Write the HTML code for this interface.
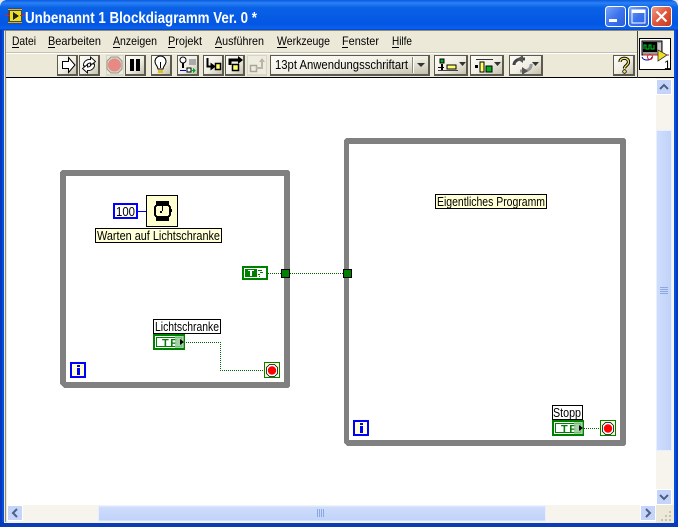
<!DOCTYPE html>
<html><head><meta charset="utf-8"><style>
html,body{margin:0;padding:0;background:#fff;width:678px;height:527px;overflow:hidden}
svg{display:block}
text{font-family:"Liberation Sans",sans-serif;fill:#000}
.m{font-size:12px}
.l{font-size:13px}
.c{shape-rendering:crispEdges}
</style></head><body>
<svg width="678" height="527" viewBox="0 0 678 527" xmlns="http://www.w3.org/2000/svg">
<defs>
<linearGradient id="tb" x1="0" y1="0" x2="0" y2="1"><stop offset="0" stop-color="#0a5ae0"/><stop offset=".1" stop-color="#2a80f4"/><stop offset=".25" stop-color="#0a62e6"/><stop offset=".8" stop-color="#0456e4"/><stop offset=".95" stop-color="#0a60ec"/><stop offset="1" stop-color="#0244c0"/></linearGradient>
<linearGradient id="bf" x1="0" y1="0" x2="1" y2="1"><stop offset="0" stop-color="#fdfcf8"/><stop offset=".55" stop-color="#f0eee2"/><stop offset="1" stop-color="#c4c1ae"/></linearGradient>
<linearGradient id="vs" x1="0" y1="0" x2="1" y2="0"><stop offset="0" stop-color="#d0defc"/><stop offset="1" stop-color="#c0d2fa"/></linearGradient>
<linearGradient id="hs" x1="0" y1="0" x2="0" y2="1"><stop offset="0" stop-color="#d0defc"/><stop offset="1" stop-color="#c0d2fa"/></linearGradient>
<linearGradient id="bb" x1="0" y1="0" x2="1" y2="1"><stop offset="0" stop-color="#7ea6f8"/><stop offset=".5" stop-color="#3c74ee"/><stop offset="1" stop-color="#2a5cd8"/></linearGradient>
<linearGradient id="rb" x1="0" y1="0" x2="1" y2="1"><stop offset="0" stop-color="#f0a08a"/><stop offset=".5" stop-color="#e0553a"/><stop offset="1" stop-color="#c03a20"/></linearGradient>
</defs>

<!-- window frame -->
<rect width="678" height="527" fill="#0450dc"/>
<rect x="0" y="522" width="678" height="5" fill="#0a3cb8" class="c"/>
<rect x="0" y="0" width="678" height="30" fill="url(#tb)"/>
<path d="M0 0h6l-3 1-2 2-1 3zM678 0h-6l3 1 2 2 1 3z" fill="#e8e8e8"/>
<rect x="0" y="30" width="2" height="497" fill="#0838c0" class="c"/>
<rect x="676" y="30" width="2" height="497" fill="#0838c0" class="c"/>
<rect x="4" y="30" width="670" height="493" fill="#ece9d8" class="c"/>
<rect x="4" y="30" width="670" height="1" fill="#8a8a80" class="c"/>
<rect x="5" y="31" width="1" height="491" fill="#8f8d80" class="c"/>
<rect x="6" y="52" width="631" height="1" fill="#c4c2b2" class="c"/>
<rect x="6" y="53" width="631" height="1" fill="#fff" class="c"/>
<rect x="6" y="77" width="668" height="1" fill="#000" class="c"/>
<rect x="637" y="31" width="1" height="47" fill="#404040" class="c"/>
<rect x="7" y="78" width="667" height="445" fill="#fff" class="c"/>

<!-- title icon -->
<g class="c"><rect x="8" y="8" width="14" height="16" fill="#4a4a40"/><rect x="8" y="9" width="14" height="1" fill="#b0b0a0" stroke-dasharray="1 1"/><rect x="8" y="22" width="14" height="1" fill="#b0b0a0"/><rect x="10" y="11" width="11" height="10" fill="#e8e020"/><path d="M13 12l6 4-6 4z" fill="#222"/><rect x="5" y="15" width="5" height="1" fill="#e02020"/><rect x="20" y="15" width="5" height="1" fill="#e02020"/></g>
<text x="25" y="23" style="font-size:15.500px;font-weight:bold;fill:#fff" textLength="232" lengthAdjust="spacingAndGlyphs">Unbenannt 1 Blockdiagramm Ver. 0 *</text>

<!-- caption buttons -->
<rect x="605.500" y="6.500" width="20" height="20" rx="3" fill="url(#bb)" stroke="#fff"/>
<rect x="609" y="19" width="8" height="3" fill="#fff" class="c"/>
<rect x="628.500" y="6.500" width="20" height="20" rx="3" fill="url(#bb)" stroke="#fff"/>
<rect x="632" y="10" width="13" height="13" fill="none" stroke="#fff" stroke-width="1"/>
<rect x="632" y="10" width="13" height="3" fill="#fff" class="c"/>
<rect x="651.500" y="6.500" width="20" height="20" rx="3" fill="url(#rb)" stroke="#fff"/>
<path d="M656.500 11.500l10 10M666.500 11.500l-10 10" stroke="#fff" stroke-width="2.200"/>

<!-- menu -->
<g class="m">
<text x="12" y="45" textLength="24" lengthAdjust="spacingAndGlyphs">Datei</text>
<text x="48" y="45" textLength="53" lengthAdjust="spacingAndGlyphs">Bearbeiten</text>
<text x="113" y="45" textLength="44" lengthAdjust="spacingAndGlyphs">Anzeigen</text>
<text x="168" y="45" textLength="34" lengthAdjust="spacingAndGlyphs">Projekt</text>
<text x="215" y="45" textLength="49" lengthAdjust="spacingAndGlyphs">Ausführen</text>
<text x="277" y="45" textLength="53" lengthAdjust="spacingAndGlyphs">Werkzeuge</text>
<text x="342" y="45" textLength="37" lengthAdjust="spacingAndGlyphs">Fenster</text>
<text x="392" y="45" textLength="20" lengthAdjust="spacingAndGlyphs">Hilfe</text>
</g>
<g fill="#000" class="c"><rect x="12" y="47" width="7" height="1"/><rect x="48" y="47" width="7" height="1"/><rect x="113" y="47" width="7" height="1"/><rect x="168" y="47" width="7" height="1"/><rect x="215" y="47" width="7" height="1"/><rect x="277" y="47" width="10" height="1"/><rect x="342" y="47" width="6" height="1"/><rect x="392" y="47" width="7" height="1"/></g>

<!-- toolbar buttons -->
<g class="c">
<g fill="#5c5a50">
<rect x="57" y="55" width="21" height="21"/><rect x="79" y="55" width="21" height="21"/><rect x="125" y="55" width="21" height="21"/><rect x="151" y="55" width="21" height="21"/><rect x="177" y="55" width="22" height="21"/><rect x="203" y="55" width="21" height="21"/><rect x="225" y="55" width="20" height="21"/><rect x="270" y="55" width="160" height="21"/><rect x="434" y="55" width="34" height="21"/><rect x="470" y="55" width="34" height="21"/><rect x="509" y="55" width="34" height="21"/><rect x="613" y="55" width="22" height="21"/>
</g>
<g fill="#d8d5c6"><rect x="106" y="55" width="18" height="21"/><rect x="247" y="55" width="20" height="21"/></g>
<g fill="url(#bf)">
<rect x="58" y="56" width="18" height="18"/><rect x="80" y="56" width="18" height="18"/><rect x="126" y="56" width="18" height="18"/><rect x="152" y="56" width="18" height="18"/><rect x="178" y="56" width="19" height="18"/><rect x="204" y="56" width="18" height="18"/><rect x="226" y="56" width="17" height="18"/><rect x="271" y="56" width="157" height="18"/><rect x="435" y="56" width="31" height="18"/><rect x="471" y="56" width="31" height="18"/><rect x="510" y="56" width="31" height="18"/><rect x="614" y="56" width="19" height="18"/>
</g>
<rect x="107" y="56" width="16" height="18" fill="#eeecdf"/><rect x="248" y="56" width="18" height="18" fill="#eeecdf"/>
</g>
<!-- run -->
<path d="M62.500 61.500h6v-4l6.500 7.500-6.500 7.500v-4h-6z" fill="#fff" stroke="#000"/>
<!-- run continuous -->
<path d="M83.500 66c-.5-4 3-7 7-6.500V57l5 4.500-5 4v-2.500c-2 0-3.500 1-4 3z" fill="#fff" stroke="#000" stroke-width=".9"/>
<path d="M94.500 64c.5 4-3 7-7 6.500V73l-5-4.500 5-4V67c2 0 3.500-1 4-3z" fill="#fff" stroke="#000" stroke-width=".9"/>
<!-- abort disabled -->
<path d="M111 57h7l4 4v8l-4 4h-7l-4-4v-8z" fill="#d8d5c6" stroke="#9a9888"/>
<circle cx="114.500" cy="65" r="6.500" fill="#e88a84"/>
<!-- pause -->
<rect x="130" y="59" width="4" height="12" class="c"/><rect x="136" y="59" width="4" height="12" class="c"/>
<!-- bulb -->
<path d="M158 69c0-3-3-4-3-7.500a5.500 5.500 0 0 1 11 0c0 3.500-3 4.500-3 7.500z" fill="#fff" stroke="#000"/>
<path d="M158 70h5v3h-5z" fill="#e0c020"/><path d="M160.500 62v6" stroke="#000"/>
<!-- retain -->
<g class="c"><rect x="189" y="59" width="7" height="6" fill="#aaa"/><rect x="182" y="63" width="2" height="5" fill="#000"/><rect x="180" y="70" width="6" height="1" fill="#0000d0"/><rect x="187" y="68" width="4" height="4" fill="#fff" stroke="#000" stroke-width=".8"/><path d="M191 70h2v-2l3 2.500-3 2.500v-2h-2z" fill="#00a030"/></g>
<circle cx="183" cy="60" r="3" fill="#fff" stroke="#000"/>
<!-- step into -->
<path d="M207.500 58v8.500h5" fill="none" stroke="#000" stroke-width="2"/><path d="M211 63.500l4 3-4 3z" stroke="#000"/><rect x="215.500" y="63.500" width="5" height="6" fill="#ffff66" stroke="#000" stroke-width="1.500"/>
<!-- step over -->
<path d="M230 65v-5h8" fill="none" stroke="#000" stroke-width="3"/><path d="M238 56l5 4-5 4z"/><rect x="232.500" y="64.500" width="6" height="6" fill="#ffff66" stroke="#000" stroke-width="1.500"/>
<!-- step out disabled -->
<rect x="250.500" y="65.500" width="6" height="6" fill="#eeecdf" stroke="#a8a698" stroke-width="1.500"/><path d="M256 67h5v-5h-2l3-4 3 4h-2v7h-7z" fill="#b8b6a6"/>
<!-- font ring -->
<text x="275" y="69" style="font-size:12.500px" textLength="133" lengthAdjust="spacingAndGlyphs">13pt Anwendungsschriftart</text>
<rect x="412" y="57" width="1" height="16" fill="#8a8878" class="c"/><rect x="413" y="57" width="1" height="16" fill="#fff" class="c"/>
<path d="M417 63h8l-4 4z" fill="#333"/>
<!-- align -->
<g class="c"><rect x="440" y="59" width="4" height="4" fill="#00b020" stroke="#000" stroke-width=".6"/><rect x="441" y="64" width="2" height="7"/><rect x="438" y="67" width="6" height="1"/><rect x="447" y="65" width="9" height="4" fill="#ffff66" stroke="#000" stroke-width=".6"/><rect x="438" y="70" width="20" height="1" fill="#444"/></g>
<path d="M459 62h7l-3.500 4z" fill="#333"/>
<!-- distribute -->
<g class="c"><rect x="476" y="59" width="17" height="1" fill="#333"/><rect x="475" y="65" width="3" height="3"/><rect x="480" y="62" width="4" height="10" fill="#ffff66" stroke="#000" stroke-width=".6"/><rect x="486" y="66" width="6" height="6" fill="#00b020" stroke="#000" stroke-width=".6"/></g>
<path d="M494 62h7l-3.500 4z" fill="#333"/>
<!-- reorder -->
<path d="M514 65a7 6 0 0 1 7-6h4" fill="none" stroke="#444" stroke-width="3"/><path d="M531 64a7 6 0 0 1-7 7h-4" fill="none" stroke="#999" stroke-width="3"/><path d="M523 55l-6 4 6 4zM522 67l6 4-6 4z" fill="#555"/>
<path d="M532 62h7l-3.500 4z" fill="#333"/>
<!-- help -->
<path d="M620 62c0-5 8.500-5 8.500 0 0 3.500-4 3.500-4 6.500" fill="none" stroke="#000" stroke-width="3.200"/><path d="M620 62c0-5 8.500-5 8.500 0 0 3.500-4 3.500-4 6.500" fill="none" stroke="#f4e860" stroke-width="1.300"/><circle cx="624.500" cy="71.500" r="1.800" fill="#f4e860" stroke="#000" stroke-width=".8"/>
<!-- VI icon -->
<rect x="639.500" y="38.500" width="31" height="31" fill="#fff" stroke="#000" class="c"/>
<g class="c"><rect x="642" y="41" width="20" height="14" fill="#999" stroke="#000" stroke-width="1"/><rect x="643" y="42" width="14" height="10" fill="#000"/><rect x="658" y="43" width="3" height="8" fill="#ccc"/></g>
<path d="M644 49v-4h2v4h3v-4h2v4h3v-4" fill="none" stroke="#00d020"/>
<path d="M642 57c1 4 9 4 10 0" fill="none" stroke="#0000c0"/><circle cx="650" cy="57" r="2.500" fill="none" stroke="#d02020"/>
<path d="M643 55h26" stroke="#d02020"/>
<path d="M658 50l9 5-9 6z" fill="#f0e020" stroke="#333" stroke-width=".8"/>
<text x="664" y="69" style="font-size:12px">1</text>

<!-- loops -->
<g class="c" fill="#808080">
<path d="M62 170h226l2 2v207h-6V176H66v206h218v-3h6v7l-2 2H64l-1-1-3-3V172z"/>
<path d="M346 138h278l2 2v299h-6V144H349v296h271v-1h6v5l-2 2H347l-3-3V140z"/>
</g>

<!-- wait node -->
<g class="c">
<rect x="114" y="204" width="23" height="14" fill="#fff" stroke="#0000ff" stroke-width="2"/>
<rect x="138" y="211" width="8" height="1" fill="#0000ff"/>
<rect x="146.500" y="195.500" width="31" height="31" fill="#ffffd0" stroke="#000"/>
<rect x="156" y="201" width="13" height="4" fill="#000"/><rect x="156" y="217" width="13" height="4" fill="#000"/>
<rect x="155" y="205" width="15" height="12" rx="3" fill="#ffffd0" stroke="#000" stroke-width="2"/>
<rect x="162" y="206" width="1" height="5"/><rect x="160" y="211" width="2" height="2"/>
<rect x="170" y="209" width="2" height="3"/>
</g>
<text x="116" y="216" style="font-size:13px" textLength="19" lengthAdjust="spacingAndGlyphs">100</text>
<rect x="95.500" y="228.500" width="126" height="14" fill="#ffffd8" stroke="#000" class="c"/>
<text x="97" y="240" class="l" textLength="123" lengthAdjust="spacingAndGlyphs">Warten auf Lichtschranke</text>

<!-- shift T indicator -->
<g class="c">
<rect x="243" y="267" width="24" height="12" fill="#fff" stroke="#008000" stroke-width="2"/>
<rect x="245" y="269" width="12" height="8" fill="#008000"/>
<rect x="248" y="270" width="6" height="1" fill="#fff"/><rect x="250" y="271" width="2" height="5" fill="#fff"/>
<g fill="#008000"><rect x="258" y="270" width="4" height="1"/><rect x="260" y="272" width="3" height="1"/><rect x="258" y="274" width="2" height="1"/><rect x="259" y="276" width="1" height="1"/></g>
<rect x="281.500" y="269.500" width="8" height="8" fill="#008000" stroke="#000"/>
<rect x="343.500" y="269.500" width="8" height="8" fill="#008000" stroke="#000"/>
</g>
<!-- wires -->
<g class="c" fill="none" stroke="#006400" stroke-dasharray="1 1">
<path d="M268 273.500h13"/>
<path d="M290 273.500h53"/>
<path d="M186 342.500h34.500v28H264"/>
<path d="M584 428.500h16"/>
</g>

<!-- Lichtschranke -->
<rect x="153.500" y="319.500" width="67" height="14" fill="#fff" stroke="#000" class="c"/>
<text x="155" y="331" class="l" textLength="64" lengthAdjust="spacingAndGlyphs">Lichtschranke</text>
<g class="c">
<rect x="153" y="334" width="32" height="16" fill="#008000"/>
<rect x="155" y="336" width="28" height="12" fill="#fff"/>
<rect x="156" y="337" width="26" height="10" fill="#008000"/>
<rect x="157" y="338" width="24" height="8" fill="#fff"/>
</g>
<text x="162" y="346.500" style="font-size:11px;font-weight:bold;fill:#008000;letter-spacing:1.500px">TF</text>
<rect x="175" y="336" width="9" height="12" fill="#8fc88f" fill-opacity=".8" class="c"/>
<path d="M180 339l4 3-4 3z" fill="#000"/>

<!-- stop left -->
<rect x="264.500" y="362.500" width="15" height="15" fill="#ffffd8" stroke="#008000" class="c"/>
<path d="M269.500 364.500h5l3 3v6l-3 3h-5l-3-3v-6z" fill="#fff" stroke="#000" stroke-width=".8"/>
<circle cx="272" cy="370.500" r="4.200" fill="#ff0000"/>
<!-- i left -->
<rect x="71" y="363" width="14" height="14" fill="#ffffd0" stroke="#0000ff" stroke-width="2" class="c"/>
<g fill="#0000ff" class="c"><rect x="77" y="365" width="3" height="2"/><rect x="77" y="368" width="3" height="7"/></g>

<!-- Eigentliches Programm -->
<rect x="435.500" y="194.500" width="111" height="14" fill="#ffffd8" stroke="#000" class="c"/>
<text x="437" y="206" class="l" textLength="108" lengthAdjust="spacingAndGlyphs">Eigentliches Programm</text>

<!-- Stopp -->
<rect x="552.500" y="405.500" width="30" height="14" fill="#fff" stroke="#000" class="c"/>
<text x="553" y="417" class="l" textLength="28" lengthAdjust="spacingAndGlyphs">Stopp</text>
<g class="c">
<rect x="552" y="420" width="32" height="16" fill="#008000"/>
<rect x="554" y="422" width="28" height="12" fill="#fff"/>
<rect x="555" y="423" width="26" height="10" fill="#008000"/>
<rect x="556" y="424" width="24" height="8" fill="#fff"/>
</g>
<text x="561" y="432.500" style="font-size:11px;font-weight:bold;fill:#008000;letter-spacing:1.500px">TF</text>
<rect x="574" y="422" width="9" height="12" fill="#8fc88f" fill-opacity=".8" class="c"/>
<path d="M579 425l4 3-4 3z" fill="#000"/>
<rect x="600.500" y="420.500" width="15" height="15" fill="#ffffd8" stroke="#008000" class="c"/>
<path d="M605.500 422.500h5l3 3v6l-3 3h-5l-3-3v-6z" fill="#fff" stroke="#000" stroke-width=".8"/>
<circle cx="608" cy="428.500" r="4.200" fill="#ff0000"/>
<rect x="354" y="421" width="14" height="14" fill="#ffffd0" stroke="#0000ff" stroke-width="2" class="c"/>
<g fill="#0000ff" class="c"><rect x="360" y="423" width="3" height="2"/><rect x="360" y="426" width="3" height="7"/></g>

<!-- vertical scrollbar -->
<g class="c">
<rect x="656" y="78" width="18" height="427" fill="#f6f4ec"/>
<rect x="656.500" y="79.500" width="15" height="15" fill="#c4d4fa" stroke="#fff"/>
<rect x="656.500" y="489.500" width="15" height="15" fill="#c4d4fa" stroke="#fff"/>
<rect x="656.500" y="130.500" width="15" height="320" fill="url(#vs)" stroke="#e8f0ff"/>
<g fill="#8ca8e0"><rect x="660" y="287" width="8" height="1"/><rect x="660" y="289" width="8" height="1"/><rect x="660" y="291" width="8" height="1"/><rect x="660" y="293" width="8" height="1"/></g>
<!-- horizontal scrollbar -->
<rect x="7" y="505" width="667" height="18" fill="#f6f4ec"/>
<rect x="7.500" y="505.500" width="15" height="15" fill="#c4d4fa" stroke="#fff"/>
<rect x="640.500" y="505.500" width="15" height="15" fill="#c4d4fa" stroke="#fff"/>
<rect x="98.500" y="506" width="447" height="15" fill="url(#hs)" stroke="#e8f0ff"/>
<g fill="#8ca8e0"><rect x="317" y="509" width="1" height="8"/><rect x="319" y="509" width="1" height="8"/><rect x="321" y="509" width="1" height="8"/><rect x="323" y="509" width="1" height="8"/></g>
<rect x="656" y="505" width="18" height="18" fill="#ece9d8"/>
<g fill="#c4c2b0"><rect x="669" y="511" width="2" height="2"/><rect x="665" y="515" width="2" height="2"/><rect x="669" y="515" width="2" height="2"/><rect x="661" y="519" width="2" height="2"/><rect x="665" y="519" width="2" height="2"/><rect x="669" y="519" width="2" height="2"/></g>
</g>
<g fill="none" stroke="#4d6185" stroke-width="2">
<path d="M660 89l4-4 4 4"/>
<path d="M660 495l4 4 4-4"/>
<path d="M17 509l-4 4 4 4"/>
<path d="M646 509l4 4-4 4"/>
</g>
</svg>
</body></html>
